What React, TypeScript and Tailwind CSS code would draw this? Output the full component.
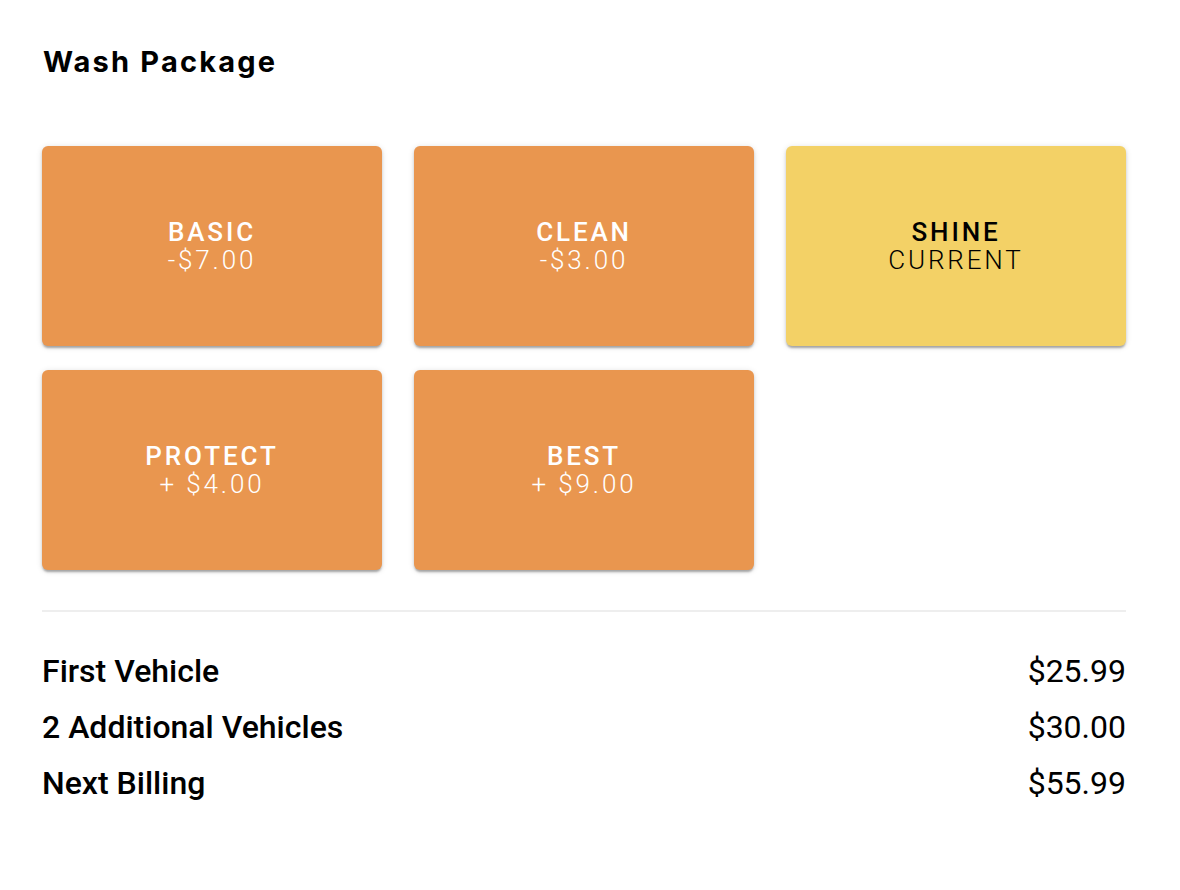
const packages = [
  { name: "BASIC", detail: "-$7.00" },
  { name: "CLEAN", detail: "-$3.00" },
  { name: "SHINE", detail: "CURRENT", current: true },
  { name: "PROTECT", detail: "+ $4.00" },
  { name: "BEST", detail: "+ $9.00" },
];

const lines = [
  { label: "First Vehicle", amount: "$25.99" },
  { label: "2 Additional Vehicles", amount: "$30.00" },
  { label: "Next Billing", amount: "$55.99" },
];

export default function App() {
  return (
    <div className="min-h-screen bg-white pl-[42px] pr-[54px] pt-[40px] font-['Roboto',sans-serif]">
      <h2 className="pl-[1px] font-['Inter',sans-serif] text-[29px] font-bold leading-[44px] tracking-[0.075em] text-black">
        Wash Package
      </h2>

      <div className="mt-[62px] grid grid-cols-3 gap-x-[32px] gap-y-[24px]">
        {packages.map((p) => (
          <button
            key={p.name}
            className={`flex h-[200px] flex-col items-center justify-center rounded-[6px] text-[26px] leading-[28px] shadow-[0_3px_2px_-1px_rgba(0,0,0,0.2),0_2px_3px_0_rgba(0,0,0,0.14),0_1px_6px_0_rgba(0,0,0,0.12)] ${
              p.current ? "bg-[#f3d166] text-black" : "bg-[#e9964f] text-white"
            }`}
          >
            <span className="font-medium tracking-[0.11em]">{p.name}</span>
            <span className="font-light tracking-[0.11em]">{p.detail}</span>
          </button>
        ))}
      </div>

      <div className="mt-[40px] border-t-2 border-[#eeeeee] pt-[31px]">
        {lines.map((l) => (
          <div key={l.label} className="flex h-[56px] items-center justify-between text-[32px] text-black">
            <span className="font-medium">{l.label}</span>
            <span>{l.amount}</span>
          </div>
        ))}
      </div>
    </div>
  );
}
